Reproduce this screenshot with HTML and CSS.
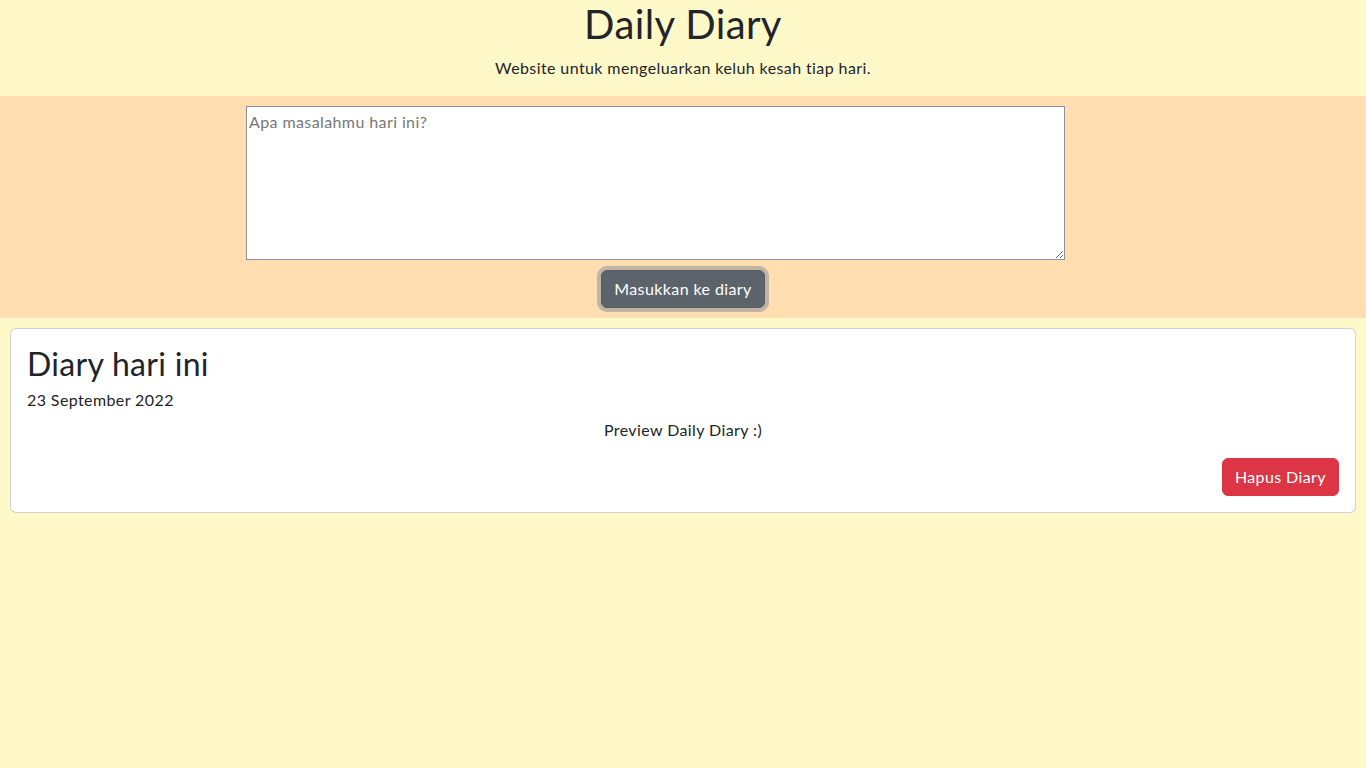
FILE: index.html
```html
<!DOCTYPE html>
<html lang="id">
<head>
<meta charset="utf-8">
<title>Daily Diary</title>
<link rel="stylesheet" href="styles.css">
</head>
<body>
<header class="header">
  <h1 class="title">Daily Diary</h1>
  <p class="subtitle">Website untuk mengeluarkan keluh kesah tiap hari.</p>
</header>
<section class="composer">
  <textarea class="entry" placeholder="Apa masalahmu hari ini?"></textarea>
  <button class="btn btn-secondary" type="button">Masukkan ke diary</button>
</section>
<article class="card">
  <div class="card-body">
    <h2 class="card-title">Diary hari ini</h2>
    <p class="card-subtitle">23 September 2022</p>
    <p class="card-text">Preview Daily Diary :)</p>
    <div class="card-actions">
      <button class="btn btn-danger" type="button">Hapus Diary</button>
    </div>
  </div>
</article>
</body>
</html>
```
FILE: styles.css
```css
* { box-sizing: border-box; }
html, body { margin: 0; padding: 0; }
body {
  background: #fff8c9;
  color: #212529;
  font-family: Lato, "Open Sans", "Liberation Sans", sans-serif;
  font-size: 16px;
  line-height: 1.5;
  letter-spacing: 0.4px;
  min-height: 768px;
}
.header { text-align: center; }
.title {
  margin: 0 0 8px;
  font-size: 40px;
  font-weight: 400;
  line-height: 1.2;
  letter-spacing: 0.4px;
}
.subtitle { margin: 0 0 16px; }
.composer {
  background: #ffdfb2;
  padding: 10px;
  display: flex;
  flex-direction: column;
  align-items: center;
  gap: 10px;
}
.entry {
  width: 819px;
  height: 154px;
  margin-right: 55px;
  border: 1px solid #8f8f9d;
  background: #fff;
  padding: 3px 2px 2px;
  font: inherit;
  letter-spacing: 0.4px;
  line-height: 1.5;
  color: #212529;
}
.entry::placeholder { color: #777; }
.btn {
  font: inherit;
  font-size: 16px;
  line-height: 24px;
  letter-spacing: 0.4px;
  padding: 6px 12px;
  border-radius: 6px;
  border: 1px solid transparent;
  color: #fff;
}
.btn-secondary {
  background: #5c636a;
  border-color: #565e64;
  box-shadow: 0 0 0 4px rgba(130, 138, 145, 0.5);
}
.btn-danger {
  background: #dc3545;
  border-color: #dc3545;
}
.card {
  margin: 10px;
  background: #fff;
  border: 1px solid rgba(0, 0, 0, 0.175);
  border-radius: 6px;
}
.card-body { padding: 16px; }
.card-title {
  margin: 0 0 8px;
  font-size: 32px;
  font-weight: 400;
  line-height: 1.2;
  letter-spacing: 0.3px;
}
.card-subtitle { margin: -3px 0 0; }
.card-text { margin: 6px 0 16px; text-align: center; }
.card-actions { display: flex; justify-content: flex-end; }
```
